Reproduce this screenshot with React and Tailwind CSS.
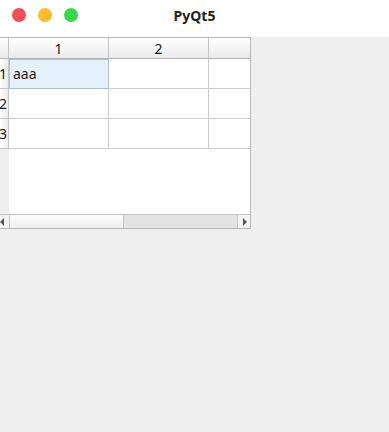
import React from 'react';

const font = { fontFamily: '"Noto Sans", "DejaVu Sans", sans-serif' };

const rows = ['1', '2', '3'];

const App = () => {
  return (
    <div className="w-[389px] h-[432px] bg-[#efefef] flex flex-col overflow-hidden" style={font}>
      {/* title bar */}
      <div className="h-[37px] bg-white grid grid-cols-[1fr_auto_1fr] items-center shrink-0">
        <div className="flex items-center gap-[12px] pl-[12px] -mt-[7px]">
          <span className="w-[14px] h-[14px] rounded-full bg-[#f25056]"></span>
          <span className="w-[14px] h-[14px] rounded-full bg-[#fbbc2e]"></span>
          <span className="w-[14px] h-[14px] rounded-full bg-[#39d84a]"></span>
        </div>
        <div className="text-[14px] font-bold text-[#222] -mt-[6px]">PyQt5</div>
        <div></div>
      </div>

      {/* table widget */}
      <div className="w-[251px] h-[192px] border-t border-b border-r border-[#b8b8b8] flex flex-col bg-white text-[14px] text-[#1a1a1a]">
        {/* horizontal header */}
        <div className="flex h-[21px] border-b border-[#b4b4b4] bg-gradient-to-b from-white to-[#eaeaea] shrink-0">
          <div className="w-[9px] border-r border-[#c4c4c4]"></div>
          <div className="w-[100px] border-r border-[#c4c4c4] flex items-center justify-center">1</div>
          <div className="w-[100px] border-r border-[#c4c4c4] flex items-center justify-center">2</div>
          <div className="flex-1"></div>
        </div>

        {rows.map((r) => (
          <div key={r} className="flex h-[30px] shrink-0">
            <div className="w-[9px] border-r border-b border-[#c4c4c4] bg-gradient-to-r from-white to-[#ececec] flex items-center justify-end overflow-hidden pr-[1px]">
              {r}
            </div>
            {r === '1' ? (
              <div className="w-[100px] border border-[#a9c2d8] bg-[#e4f1fb] flex items-center pl-[3px] pb-[1px]">aaa</div>
            ) : (
              <div className="w-[100px] border-r border-b border-[#cccccc]"></div>
            )}
            <div className="w-[100px] border-r border-b border-[#cccccc]"></div>
            <div className="flex-1 border-b border-[#cccccc]"></div>
          </div>
        ))}

        {/* empty area */}
        <div className="flex flex-1">
          <div className="w-[9px] bg-[#efefef]"></div>
          <div className="flex-1 bg-white"></div>
        </div>

        {/* horizontal scrollbar */}
        <div className="flex h-[14px] border-t border-[#c4c4c4] shrink-0">
          <div className="w-[10px] border-r border-[#c4c4c4] bg-[#f4f4f4] flex items-center justify-start">
            <svg width="5" height="8" viewBox="0 0 5 8">
              <path d="M0 4 L4 0 L4 8 Z" fill="#555" />
            </svg>
          </div>
          <div className="w-[114px] border-r border-[#c4c4c4] bg-gradient-to-b from-white to-[#ededed]"></div>
          <div className="flex-1 bg-[#e3e3e3]"></div>
          <div className="w-[13px] border-l border-[#c4c4c4] bg-[#f4f4f4] flex items-center justify-center">
            <svg width="5" height="8" viewBox="0 0 5 8">
              <path d="M5 4 L1 0 L1 8 Z" fill="#555" />
            </svg>
          </div>
        </div>
      </div>
    </div>
  );
};

export default App;
